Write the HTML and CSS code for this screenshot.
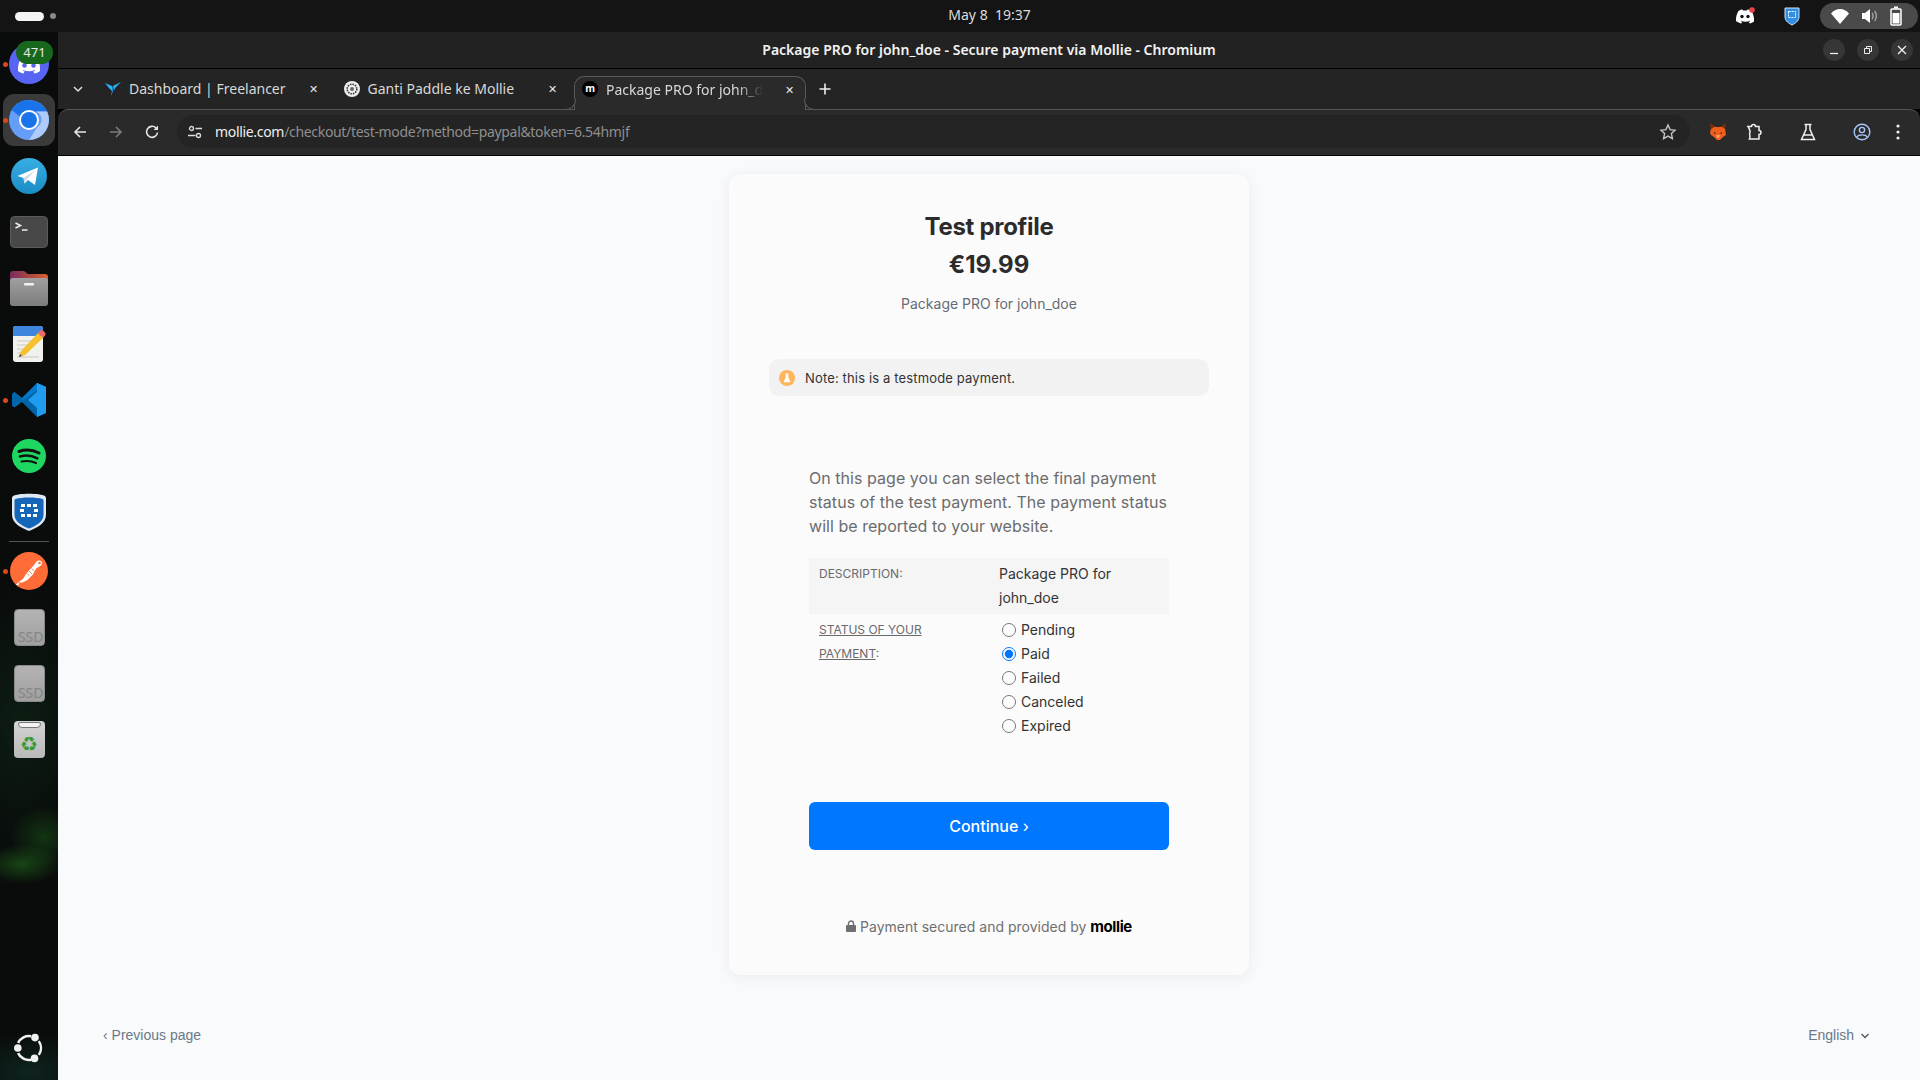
FILE: index.html
```html
<!DOCTYPE html>
<html>
<head>
    <meta charset="UTF-8">
    <meta name="viewport" content="width=device-width, initial-scale=1.0">
    <title>Package PRO for john_doe - Secure payment via Mollie</title>
    <link rel="stylesheet" href="styles.css">
</head>
<body>
    <header class="topbar">
        <div class="workspaces"><span class="ws-active"></span><span class="ws-dot"></span></div>
        <div class="clock">May 8&nbsp; 19:37</div>
        <div class="tray">
            <svg class="tray-icon" width="20" height="18" viewBox="0 0 20 18"><path fill="#fff" d="M1 14.500c-.4-4 .7-8 2.700-10.800 1.500-.8 3-1.200 3.800-1.200l.5 1h4l.5-1c.8 0 2.300.4 3.800 1.200 2 2.800 3.100 6.800 2.700 10.800-1.500 1.200-3 1.700-4.200 2l-1-1.600 1.600-.8-.4-.3c-2.800 1.300-6.200 1.300-9 0l-.4.3 1.600.8-1 1.600c-1.200-.3-2.700-.8-4.200-2z"/><circle cx="7" cy="9.500" r="1.700" fill="#141414"/><circle cx="13" cy="9.500" r="1.700" fill="#141414"/><circle cx="17" cy="3" r="2.800" fill="#ed4245"/></svg>
            <svg class="tray-icon shield" width="16" height="20" viewBox="0 0 16 20"><path fill="#2f8fe6" stroke="#cfe3f7" d="M1 2h14v9c0 4-4 6.500-7 8-3-1.500-7-4-7-8z"/><rect x="4.500" y="5.500" width="7" height="6" fill="none" stroke="#fff" stroke-dasharray="2 1"/></svg>
            <div class="tray-pill">
                <svg width="18" height="15" viewBox="0 0 18 15"><path fill="#fff" d="M0 4.500C2.500 1.500 5.500 0 9 0s6.500 1.500 9 4.500L9 15z"/></svg>
                <svg width="18" height="16" viewBox="0 0 18 16"><path fill="#fff" d="M1 5h3l5-4v14l-5-4H1z"/><path fill="none" stroke="#aaa" stroke-width="1.300" d="M11 5c1.500 1.500 1.500 4.500 0 6M13.500 3c2.500 2.500 2.500 7.500 0 10"/></svg>
                <svg width="12" height="20" viewBox="0 0 12 20"><path fill="none" stroke="#fff" stroke-width="1.500" d="M2 3h8a1 1 0 0 1 1 1v14a1 1 0 0 1-1 1H2a1 1 0 0 1-1-1V4a1 1 0 0 1 1-1z"/><rect x="4" y="0.500" width="4" height="2" fill="#fff"/><rect x="2.500" y="7" width="7" height="10.500" fill="#fff"/></svg>
            </div>
        </div>
    </header>

    <div class="workspace">
        <aside class="dock">
            <div class="dock-item">
                <span class="run-dot"></span>
                <svg width="40" height="40" viewBox="0 0 40 40"><circle cx="20" cy="20" r="20" fill="#5865f2"/><path fill="#fff" d="M9 27c-.5-5 1-10 3.500-13.500 2-1 4-1.500 5-1.500l.6 1.300h3.800l.6-1.300c1 0 3 .5 5 1.500C30 17 31.500 22 31 27c-2 1.500-4 2.200-5.500 2.500L24.300 27.500l2-1-.5-.4c-3.500 1.600-8 1.600-11.600 0l-.5.400 2 1-1.200 2C13 29.200 11 28.500 9 27z"/><circle cx="15.500" cy="21.500" r="2.300" fill="#5865f2"/><circle cx="24.500" cy="21.500" r="2.300" fill="#5865f2"/></svg>
                <span class="dock-badge">471</span>
            </div>
            <div class="dock-item dock-item-active">
                <span class="run-dot"></span>
                <svg width="40" height="40" viewBox="0 0 40 40"><circle cx="20" cy="20" r="20" fill="#669df6"/><path fill="#1a73e8" d="M2.700 10A20 20 0 0 1 38 11.500H20a9 9 0 0 0-8.500 5.500z"/><path fill="#aecbfa" d="M38 11.500A20 20 0 0 1 20 40l8-12.500a9 9 0 0 0-1-16z"/><circle cx="20" cy="20" r="10" fill="#fff"/><circle cx="20" cy="20" r="8" fill="#1a73e8"/></svg>
            </div>
            <div class="dock-item">
                <svg width="36" height="36" viewBox="0 0 36 36"><defs><linearGradient id="tg" x1="0" y1="0" x2="0" y2="1"><stop offset="0" stop-color="#38aee4"/><stop offset="1" stop-color="#1b8dc4"/></linearGradient></defs><circle cx="18" cy="18" r="18" fill="url(#tg)"/><path fill="#fff" d="M6.500 18 27 9.500 24 27l-7-5-3.500 3.500-1-5.500z"/><path fill="#c8daea" d="M12.500 20 24 12.500 15.500 21.500l-2 4z"/></svg>
            </div>
            <div class="dock-item">
                <svg width="38" height="32" viewBox="0 0 38 32"><rect x="0.500" y="0.500" width="37" height="31" rx="4" fill="#484848" stroke="#5c5c5c"/><path fill="none" stroke="#eee" stroke-width="1.500" d="M5.500 7l5 2.500-5 2.500M12 14h5.500"/></svg>
            </div>
            <div class="dock-item">
                <svg width="38" height="36" viewBox="0 0 38 36"><defs><linearGradient id="fo" x1="0" y1="0" x2="1" y2="0"><stop offset="0" stop-color="#7a2a5e"/><stop offset="1" stop-color="#d9622b"/></linearGradient><linearGradient id="fb" x1="0" y1="0" x2="0" y2="1"><stop offset="0" stop-color="#a0a0a0"/><stop offset="1" stop-color="#7c7c7c"/></linearGradient></defs><path fill="url(#fo)" d="M0 4a3 3 0 0 1 3-3h11l4 3h17a3 3 0 0 1 3 3v8H0z"/><rect y="8" width="38" height="28" rx="3" fill="url(#fb)"/><rect x="14" y="13" width="10" height="2.500" rx="1" fill="#f2f2f2"/></svg>
            </div>
            <div class="dock-item">
                <svg width="36" height="38" viewBox="0 0 36 38"><rect x="2" y="1" width="30" height="36" rx="3" fill="#f1f1ee"/><path fill="#3d85dd" d="M2 4a3 3 0 0 1 3-3h24a3 3 0 0 1 3 3v7H2z"/><path stroke="#c8c8c4" stroke-width="1.200" d="M6 16h18M6 20h16M6 24h12M6 28h10M6 32h22"/><path fill="#f6c12e" d="M8 32l2-6L27 8l5 5-18 17z"/><path fill="#ee6a66" d="M27 8l2-2.500c1-.8 2-.8 3 0l2 2c.8 1 .8 2 0 3L32 13z"/><path fill="#444" d="M8 32l1-3 2 2z"/></svg>
            </div>
            <div class="dock-item">
                <span class="run-dot"></span>
                <svg width="36" height="36" viewBox="0 0 36 36"><path fill="#0065a9" d="M26 1 11 16 3.500 10.500 1 12v12l2.500 1.500L11 20l15 15 9-4V5z"/><path fill="#007acc" d="M26 1l9 4v5L26 8 13 18 4 11l-3 1 2.500-2L11 16z"/><path fill="#1f9cf0" d="M26 1l9 4v26l-9 4V26l-9-8 9-8z"/></svg>
            </div>
            <div class="dock-item">
                <svg width="34" height="34" viewBox="0 0 34 34"><circle cx="17" cy="17" r="17" fill="#1ed760"/><path fill="none" stroke="#111" stroke-linecap="round" stroke-width="3" d="M7 12.500c6-2 14-1.500 20 1.500"/><path fill="none" stroke="#111" stroke-linecap="round" stroke-width="2.500" d="M8 17.500c5.500-1.500 12-1 17.500 1.800"/><path fill="none" stroke="#111" stroke-linecap="round" stroke-width="2" d="M9.500 22.500c4.500-1 10-.7 14.500 1.500"/></svg>
            </div>
            <div class="dock-item">
                <svg width="34" height="38" viewBox="0 0 34 38"><path fill="#dfe9f3" d="M1 3c5-3 27-3 32 0 1 1 1 2 1 3v16c0 8-9 13-17 16C9 35 0 30 0 22V6c0-1 0-2 1-3z"/><path fill="#1565b8" d="M3.500 6c6-2 21-2 27 0 .6.300 1 .8 1 1.500V22c0 6.500-7.500 11-14.500 13.500C10 33 2.500 28.500 2.500 22V7.500c0-.7.400-1.200 1-1.500z"/><g fill="#fff"><rect x="9" y="11" width="4" height="3"/><rect x="15" y="11" width="4" height="3"/><rect x="21" y="11" width="4" height="3"/><rect x="8" y="16" width="4" height="3"/><rect x="22" y="16" width="4" height="3"/><rect x="9" y="21" width="4" height="3"/><rect x="15" y="21" width="4" height="3"/><rect x="21" y="21" width="4" height="3"/></g></svg>
            </div>
            <div class="dock-sep"></div>
            <div class="dock-item">
                <span class="run-dot"></span>
                <svg width="38" height="38" viewBox="0 0 38 38"><circle cx="19" cy="19" r="19" fill="#ff6c37"/><path fill="#fff" d="M8 30.500l5-3.500 3-5 8-9c1-1.500 2-3 3.500-4 2-1 4.500 0 4.500 2 0 1.500-1 2.500-2.500 3.500l-3 1.500-4 7-5 5-5 2.500zM6 32.500l2-2 1.500 1.500-2 1.500z"/><path fill="none" stroke="#ff6c37" stroke-width=".8" d="M19 19l3 3M17 21.500l3 3M21.500 16.500l3 2.500"/><circle cx="29.500" cy="11" r="1.300" fill="#ff6c37"/></svg>
            </div>
            <div class="dock-item"><div class="ssd">SSD</div></div>
            <div class="dock-item"><div class="ssd">SSD</div></div>
            <div class="dock-item"><div class="trash"><span class="trash-lid"></span><span class="recycle">♻</span></div></div>
            <div class="dock-apps">
                <svg width="30" height="30" viewBox="0 0 30 30"><path fill="none" stroke="#f2f2f2" stroke-width="2.500" d="M4.100 9.900A12 12 0 0 1 17.100 3.200M24.800 8.100A12 12 0 0 1 24.800 21.900M17.100 26.800A12 12 0 0 1 4.100 20.100"/><circle cx="3.800" cy="15" r="3.800" fill="#f2f2f2"/><circle cx="21" cy="4.600" r="3.800" fill="#f2f2f2"/><circle cx="20.500" cy="25.400" r="3.800" fill="#f2f2f2"/></svg>
            </div>
        </aside>

        <main class="window">
            <div class="titlebar">
                <div class="window-title">Package PRO for john_doe - Secure payment via Mollie - Chromium</div>
                <div class="window-controls">
                    <button class="win-btn"><svg width="12" height="12" viewBox="0 0 12 12"><path stroke="#eee" stroke-width="1.300" d="M2 9.500h8"/></svg></button>
                    <button class="win-btn"><svg width="12" height="12" viewBox="0 0 12 12"><path fill="none" stroke="#eee" d="M2.500 4.500h5v5h-5zM4.500 4.500v-2h5v5h-2"/></svg></button>
                    <button class="win-btn"><svg width="12" height="12" viewBox="0 0 12 12"><path stroke="#eee" stroke-width="1.300" d="M2 2l8 8M10 2l-8 8"/></svg></button>
                </div>
            </div>

            <div class="tabstrip">
                <div class="strip-btn strip-first"><svg width="12" height="12" viewBox="0 0 12 12"><path fill="none" stroke="#ddd" stroke-width="1.500" d="M2 4l4 4 4-4"/></svg></div>
                <div class="tab">
                    <svg class="tab-icon" width="16" height="16" viewBox="0 0 16 16"><path fill="#29b2fe" d="M0 2l7 3 1 5-2 5 1-5-3-3z"/><path fill="#29b2fe" d="M16 1 8 5l1 4 2-3z"/><path fill="#0e86d4" d="M7 5l2 4-2 2z"/></svg>
                    <span class="tab-label">Dashboard | Freelancer</span>
                    <span class="tab-close">✕</span>
                </div>
                <div class="tab">
                    <svg class="tab-icon" width="16" height="16" viewBox="0 0 16 16"><circle cx="8" cy="8" r="8" fill="#eee"/><circle cx="8" cy="8" r="4.800" fill="none" stroke="#333" stroke-width="1.600" stroke-dasharray="1.500 1"/><circle cx="8" cy="8" r="2" fill="#666"/></svg>
                    <span class="tab-label">Ganti Paddle ke Mollie</span>
                    <span class="tab-close">✕</span>
                </div>
                <div class="tab tab-active">
                    <span class="mollie-fav">m</span>
                    <span class="tab-label tab-fade">Package PRO for john_doe</span>
                    <span class="tab-close">✕</span>
                </div>
                <div class="strip-btn"><svg width="14" height="14" viewBox="0 0 14 14"><path stroke="#eee" stroke-width="1.600" d="M7 1.500v11M1.500 7h11"/></svg></div>
            </div>

            <div class="toolbar">
                <button class="nav-btn"><svg width="16" height="16" viewBox="0 0 16 16"><path fill="none" stroke="#e6e6e6" stroke-width="1.600" d="M14 8H3M8 3 3 8l5 5"/></svg></button>
                <button class="nav-btn"><svg width="16" height="16" viewBox="0 0 16 16"><path fill="none" stroke="#7d7d7d" stroke-width="1.600" d="M2 8h11M8 3l5 5-5 5"/></svg></button>
                <button class="nav-btn"><svg width="16" height="16" viewBox="0 0 16 16"><path fill="none" stroke="#e6e6e6" stroke-width="1.600" d="M13.500 8.500A5.500 5.500 0 1 1 12 4"/><path fill="#e6e6e6" d="M14 1.500V6H9.500z"/></svg></button>
                <div class="urlbar">
                    <svg class="site-icon" width="16" height="16" viewBox="0 0 16 16"><g fill="none" stroke="#ddd" stroke-width="1.300"><circle cx="4.500" cy="4.500" r="2"/><circle cx="11.500" cy="11.500" r="2"/><path d="M8.500 4.500H15M1 11.500h7.500"/></g></svg>
                    <div class="url"><span class="url-host">mollie.com</span>/checkout/test-mode?method=paypal&amp;token=6.54hmjf</div>
                    <svg class="star" width="18" height="18" viewBox="0 0 18 18"><path fill="none" stroke="#c4c4c4" stroke-width="1.400" d="M9 2l2.100 4.600 5 .6-3.700 3.400 1 5L9 13.100 4.600 15.600l1-5L1.900 7.200l5-.6z"/></svg>
                </div>
                <div class="ext-icons">
                    <svg class="ext fox" width="18" height="18" viewBox="0 0 18 18"><path fill="#7a2d0e" d="M1 0l6 4h4l6-4-1 8H2z"/><path fill="#ef5f1c" d="M2 6l3-2h8l3 2 1 6-3 2-2 2-1 1H8l-1-1-2-2-3-2-1-2z"/><path fill="#f9a06b" d="M7 12h4l-1 3H8z"/><path fill="#3b2113" d="M5 9l2 1-2 1zM13 9l-2 1 2 1z"/></svg>
                    <svg class="ext puzzle" width="18" height="18" viewBox="0 0 18 18"><path fill="none" stroke="#f0f0f0" stroke-width="1.500" d="M2 3.500h3.500a2 2 0 0 1 4 0H13v4a2 2 0 0 1 0 4V16H3.500c.8-2 .8-3.500 0-5 .8-1.500 .8-4 -1.500-7.500z"/></svg>
                    <svg class="ext flask" width="18" height="18" viewBox="0 0 18 18"><path fill="none" stroke="#f0f0f0" stroke-width="1.500" d="M5.500 1.500h7M7 1.500v5L2.500 16.500h13L11 6.500v-5M5 12h8"/></svg>
                    <svg class="ext profile" width="18" height="18" viewBox="0 0 18 18"><g fill="none" stroke="#a8c7fa" stroke-width="1.400"><circle cx="9" cy="9" r="7.800"/><circle cx="9" cy="7" r="2.600"/><path d="M3.800 14c1.500-2.800 9-2.800 10.400 0"/></g></svg>
                    <svg class="ext menu" width="4" height="16" viewBox="0 0 4 16"><g fill="#eee"><circle cx="2" cy="2" r="1.600"/><circle cx="2" cy="8" r="1.600"/><circle cx="2" cy="14" r="1.600"/></g></svg>
                </div>
            </div>

            <div class="page">
                <section class="card">
                    <h1 class="merchant">Test profile</h1>
                    <div class="amount">€19.99</div>
                    <div class="order">Package PRO for john_doe</div>

                    <div class="note">
                        <svg width="18" height="18" viewBox="0 0 18 18"><circle cx="9" cy="9" r="8" fill="#ffb55c"/><path fill="#fff" d="M7.300 4.500h3.400v.8h-.5V8l2 4.500c.1.500-.2.800-.6.800H6.400c-.4 0-.7-.3-.6-.8l2-4.500V5.300h-.5z"/></svg>
                        <span>Note: this is a testmode payment.</span>
                    </div>

                    <form class="test-form">
                        <p class="intro">On this page you can select the final payment status of the test payment. The payment status will be reported to your website.</p>
                        <div class="row row-shaded">
                            <div class="row-label">DESCRIPTION:</div>
                            <div class="row-value">Package PRO for john_doe</div>
                        </div>
                        <div class="row">
                            <div class="row-label"><u>STATUS OF YOUR PAYMENT</u>:</div>
                            <div class="row-value">
                                <label class="status"><input type="radio" name="status"> Pending</label>
                                <label class="status"><input type="radio" name="status" checked> Paid</label>
                                <label class="status"><input type="radio" name="status"> Failed</label>
                                <label class="status"><input type="radio" name="status"> Canceled</label>
                                <label class="status"><input type="radio" name="status"> Expired</label>
                            </div>
                        </div>
                        <button type="button" class="continue">Continue <span class="continue-arrow">›</span></button>
                    </form>

                    <div class="secured">
                        <svg width="10" height="12" viewBox="0 0 10 12"><path fill="#6f6f6f" d="M1 5h8a1 1 0 0 1 1 1v5a1 1 0 0 1-1 1H1a1 1 0 0 1-1-1V6a1 1 0 0 1 1-1z"/><path fill="none" stroke="#6f6f6f" stroke-width="1.400" d="M2.500 5.500V3.500a2.500 2.500 0 0 1 5 0v2"/></svg>
                        Payment secured and provided by <span class="mollie-logo">mollie</span>
                    </div>
                </section>

                <footer class="page-footer">
                    <a class="prev">‹ Previous page</a>
                    <span class="lang">English <svg class="lang-arrow" width="10" height="8" viewBox="0 0 10 8"><path fill="none" stroke="#555" stroke-width="1.300" d="M1.500 2 5 5.500 8.500 2"/></svg></span>
                </footer>
            </div>
        </main>
    </div>
</body>
</html>
```

FILE: styles.css
```css
* {
    box-sizing: border-box;
}
html, body {
    margin: 0;
    height: 100%;
    overflow: hidden;
}
body {
    display: flex;
    flex-direction: column;
    width: 1920px;
    height: 1080px;
    font-family: Inter, "Liberation Sans", sans-serif;
    background-color: #000;
}

/* system top bar */
.topbar {
    height: 32px;
    flex: none;
    display: grid;
    grid-template-columns: 1fr auto 1fr;
    align-items: center;
    background-color: #141414;
    color: #dcdcdc;
    font-family: "Noto Sans", sans-serif;
}
.workspaces {
    display: flex;
    align-items: center;
    gap: 6px;
    padding-left: 15px;
}
.ws-active {
    width: 29px;
    height: 9px;
    border-radius: 5px;
    background-color: #f4f4f4;
}
.ws-dot {
    width: 6px;
    height: 6px;
    border-radius: 50%;
    background-color: #8a8a8a;
}
.clock {
    font-size: 14px;
    padding-left: 59px;
    padding-bottom: 4px;
}
.tray {
    display: flex;
    align-items: center;
    justify-content: flex-end;
    padding-right: 2px;
}
.tray-icon {
    margin-right: 29px;
}
.tray-icon.shield {
    margin-right: 20px;
}
.tray-pill {
    width: 98px;
    height: 26px;
    border-radius: 13px;
    background-color: #4a4a4a;
    display: flex;
    align-items: center;
    justify-content: space-between;
    padding: 0 16px 0 11px;
}

.workspace {
    flex: 1;
    display: flex;
    min-height: 0;
}

/* launcher */
.dock {
    width: 58px;
    flex: none;
    display: flex;
    flex-direction: column;
    padding-top: 4px;
    background:
        radial-gradient(ellipse 40px 20px at 22px 832px, rgba(32, 100, 26, 0.65), transparent),
        radial-gradient(ellipse 34px 30px at 44px 805px, rgba(26, 85, 24, 0.55), transparent),
        radial-gradient(ellipse 70px 130px at 20px 690px, rgba(20, 70, 35, 0.3), transparent),
        radial-gradient(ellipse 70px 40px at 30px 1040px, rgba(20, 60, 50, 0.5), transparent),
        #090c0b;
}
.dock-item {
    position: relative;
    height: 56px;
    flex: none;
    display: flex;
    align-items: center;
    justify-content: center;
}
.dock-item-active::before {
    content: "";
    position: absolute;
    left: 3px;
    right: 3px;
    top: 2px;
    bottom: 2px;
    border-radius: 11px;
    background-color: #3a3a3a;
}
.dock-item svg {
    position: relative;
}
.run-dot {
    position: absolute;
    left: 3px;
    top: 26px;
    width: 5px;
    height: 5px;
    border-radius: 50%;
    background-color: #d9481c;
    z-index: 1;
}
.dock-badge {
    position: absolute;
    left: 16px;
    top: 5px;
    width: 37px;
    height: 23px;
    border-radius: 12px;
    background-color: #17681d;
    color: #e8e8e8;
    font-family: "Noto Sans", sans-serif;
    font-size: 13px;
    line-height: 23px;
    text-align: center;
}
.dock-sep {
    height: 3px;
    margin: 1px 9px -1px;
    border-top: 1px solid #555;
}
.ssd {
    width: 31px;
    height: 37px;
    border-radius: 4px;
    background: linear-gradient(#b3b3b3, #a0a0a0);
    border: 1px solid #8a8a8a;
    color: #858585;
    font-family: "Noto Sans", sans-serif;
    font-size: 14px;
    line-height: 14px;
    display: flex;
    align-items: flex-end;
    justify-content: flex-end;
    padding-bottom: 1px;
}
.trash {
    position: relative;
    width: 31px;
    height: 37px;
    border-radius: 4px;
    background: linear-gradient(#d4d4d4, #b9b9b9);
    display: flex;
    align-items: flex-end;
    justify-content: center;
    overflow: hidden;
}
.trash-lid {
    position: absolute;
    top: 1px;
    left: 4px;
    right: 4px;
    height: 6px;
    border-radius: 2px 2px 4px 4px;
    background-color: #f3f3f3;
    border: 1px solid #777;
}
.recycle {
    color: #3c9a35;
    font-family: "DejaVu Sans", sans-serif;
    font-size: 20px;
    line-height: 28px;
}
.dock-apps {
    margin-top: auto;
    height: 64px;
    display: flex;
    align-items: center;
    justify-content: center;
}

/* browser window */
.window {
    flex: 1;
    display: flex;
    flex-direction: column;
    min-width: 0;
}
.titlebar {
    position: relative;
    height: 37px;
    flex: none;
    display: flex;
    align-items: center;
    justify-content: center;
    padding-bottom: 2px;
    background-color: #222;
    border-bottom: 1px solid #000;
    color: #f2f2f2;
    font-family: "Noto Sans", sans-serif;
    font-size: 14px;
    font-weight: 600;
}
.window-controls {
    position: absolute;
    right: 7px;
    top: 7px;
    display: flex;
    gap: 12px;
}
.win-btn {
    width: 22px;
    height: 22px;
    padding: 0;
    border: none;
    border-radius: 50%;
    background-color: #363636;
    display: flex;
    align-items: center;
    justify-content: center;
}
.tabstrip {
    height: 40px;
    flex: none;
    display: flex;
    background-color: #242424;
}
.strip-btn {
    width: 38px;
    flex: none;
    display: flex;
    align-items: center;
    justify-content: center;
    padding-bottom: 1px;
}
.strip-first {
    width: 39px;
}
.tab {
    width: 238.5px;
    flex: none;
    margin-top: 6px;
    padding: 0 8px 7px 8px;
    display: flex;
    align-items: center;
    gap: 8px;
    color: #d8d8d8;
    font-family: "Noto Sans", sans-serif;
    font-size: 14px;
}
.tab-active {
    width: 232px;
    position: relative;
    z-index: 1;
    height: 34px;
    margin-top: 7px;
    padding: 0 8px 9px 7px;
    background-color: #2a2a2a;
    border: 1px solid #5a5a5a;
    border-bottom: none;
    border-radius: 10px 10px 0 0;
}
.tab-active::before,
.tab-active::after {
    content: "";
    position: absolute;
    bottom: 0;
    width: 10px;
    height: 10px;
    border-bottom: 1px solid #5a5a5a;
}
.tab-active::before {
    left: -10px;
    border-right: 1px solid #5a5a5a;
    border-bottom-right-radius: 10px;
    background-color: #242424;
}
.tab-active::after {
    right: -10px;
    border-left: 1px solid #5a5a5a;
    border-bottom-left-radius: 10px;
    background-color: #242424;
}
.tab-label {
    flex: 1;
    white-space: nowrap;
    overflow: hidden;
}
.tab-fade {
    -webkit-mask-image: linear-gradient(to left, transparent 10px, #000 36px);
    mask-image: linear-gradient(to left, transparent 10px, #000 36px);
}
.tab-close {
    width: 16px;
    margin-right: 6px;
    font-size: 11px;
    text-align: center;
    color: #e8e8e8;
    flex: none;
}
.tab-active .tab-close {
    margin-right: 0;
}
.mollie-fav {
    width: 16px;
    height: 16px;
    flex: none;
    border-radius: 50%;
    background-color: #000;
    color: #fff;
    font-size: 10px;
    font-weight: 700;
    line-height: 14px;
    text-align: center;
}
.toolbar {
    height: 47px;
    flex: none;
    display: flex;
    align-items: center;
    padding: 0 0 2px 4px;
    background-color: #2a2a2a;
    border-top: 1px solid #555;
    border-bottom: 1px solid #000;
    border-radius: 10px 10px 0 0;
}
.nav-btn {
    width: 36px;
    height: 32px;
    padding: 0;
    border: none;
    background: none;
    display: flex;
    align-items: center;
    justify-content: center;
}
.urlbar {
    width: 1513px;
    height: 33px;
    margin-left: 7px;
    padding-left: 10px;
    display: flex;
    align-items: center;
    border-radius: 17px;
    background-color: #242424;
}
.url {
    flex: 1;
    margin-left: 12px;
    color: #8f8f8f;
    font-family: "Noto Sans", sans-serif;
    font-size: 14px;
    letter-spacing: -0.32px;
}
.url-host {
    color: #eee;
}
.star {
    margin-right: 13px;
}
.ext-icons {
    display: flex;
    align-items: center;
}
.fox {
    margin-left: 19px;
}
.puzzle {
    margin-left: 19px;
}
.flask {
    margin-left: 35px;
}
.profile {
    margin-left: 36px;
}
.menu {
    margin-left: 25px;
}

/* mollie page */
.page {
    flex: 1;
    display: flex;
    flex-direction: column;
    align-items: center;
    min-height: 0;
    padding-top: 18px;
    background-color: #f9fafc;
}
.card {
    width: 520px;
    height: 801px;
    padding: 39px 40px 0;
    border-radius: 12px;
    background-color: #fbfbfc;
    box-shadow: 0 2px 14px rgba(30, 40, 60, 0.07);
    text-align: center;
}
.merchant {
    margin: 0;
    font-size: 24px;
    line-height: 28px;
    font-weight: 700;
    letter-spacing: -0.3px;
    color: #2b2b2b;
}
.amount {
    margin-top: 10px;
    font-size: 24px;
    line-height: 28px;
    font-weight: 700;
    color: #2b2b2b;
}
.order {
    margin-top: 15px;
    font-size: 14px;
    line-height: 20px;
    color: #666b75;
}
.note {
    margin-top: 45px;
    margin-bottom: 70px;
    height: 37px;
    padding-left: 9px;
    display: flex;
    align-items: center;
    gap: 9px;
    border-radius: 10px;
    background-color: #f2f2f3;
    color: #333;
    font-size: 13px;
    letter-spacing: 0.15px;
    text-align: left;
}
.test-form {
    margin: 0 40px;
    text-align: left;
}
.intro {
    margin: 0 0 20px;
    font-size: 16px;
    line-height: 24px;
    letter-spacing: 0.04px;
    color: #6c6c6c;
}
.row {
    display: grid;
    grid-template-columns: 180px 1fr;
    padding: 4px 10px;
    font-size: 14px;
    line-height: 24px;
    color: #333;
}
.row-shaded {
    background-color: #f5f5f6;
}
.row-label {
    padding-right: 60px;
    font-size: 12px;
    color: #6a6a6a;
}
.status {
    display: flex;
    align-items: center;
    gap: 5px;
    margin-left: 3px;
}
.status input {
    margin: 0;
    width: 14px;
    height: 14px;
    accent-color: #0075ff;
}
.continue {
    display: block;
    width: 100%;
    height: 48px;
    margin-top: 60px;
    border: none;
    border-radius: 6px;
    background-color: #0077ff;
    color: #fff;
    font-family: Inter, sans-serif;
    font-size: 16px;
    font-weight: 500;
}
.continue-arrow {
    font-weight: 400;
}
.secured {
    margin-top: 67px;
    font-size: 14px;
    color: #6f6f6f;
}
.mollie-logo {
    color: #000;
    font-weight: 700;
    font-size: 15px;
    letter-spacing: -0.4px;
}
.page-footer {
    align-self: stretch;
    margin-top: auto;
    padding: 0 50px 36px 45px;
    display: flex;
    justify-content: space-between;
    font-family: "Liberation Sans", sans-serif;
    font-size: 14px;
    line-height: 18px;
    color: #6b7888;
}
.lang-arrow {
    margin-left: 2px;
}
```
